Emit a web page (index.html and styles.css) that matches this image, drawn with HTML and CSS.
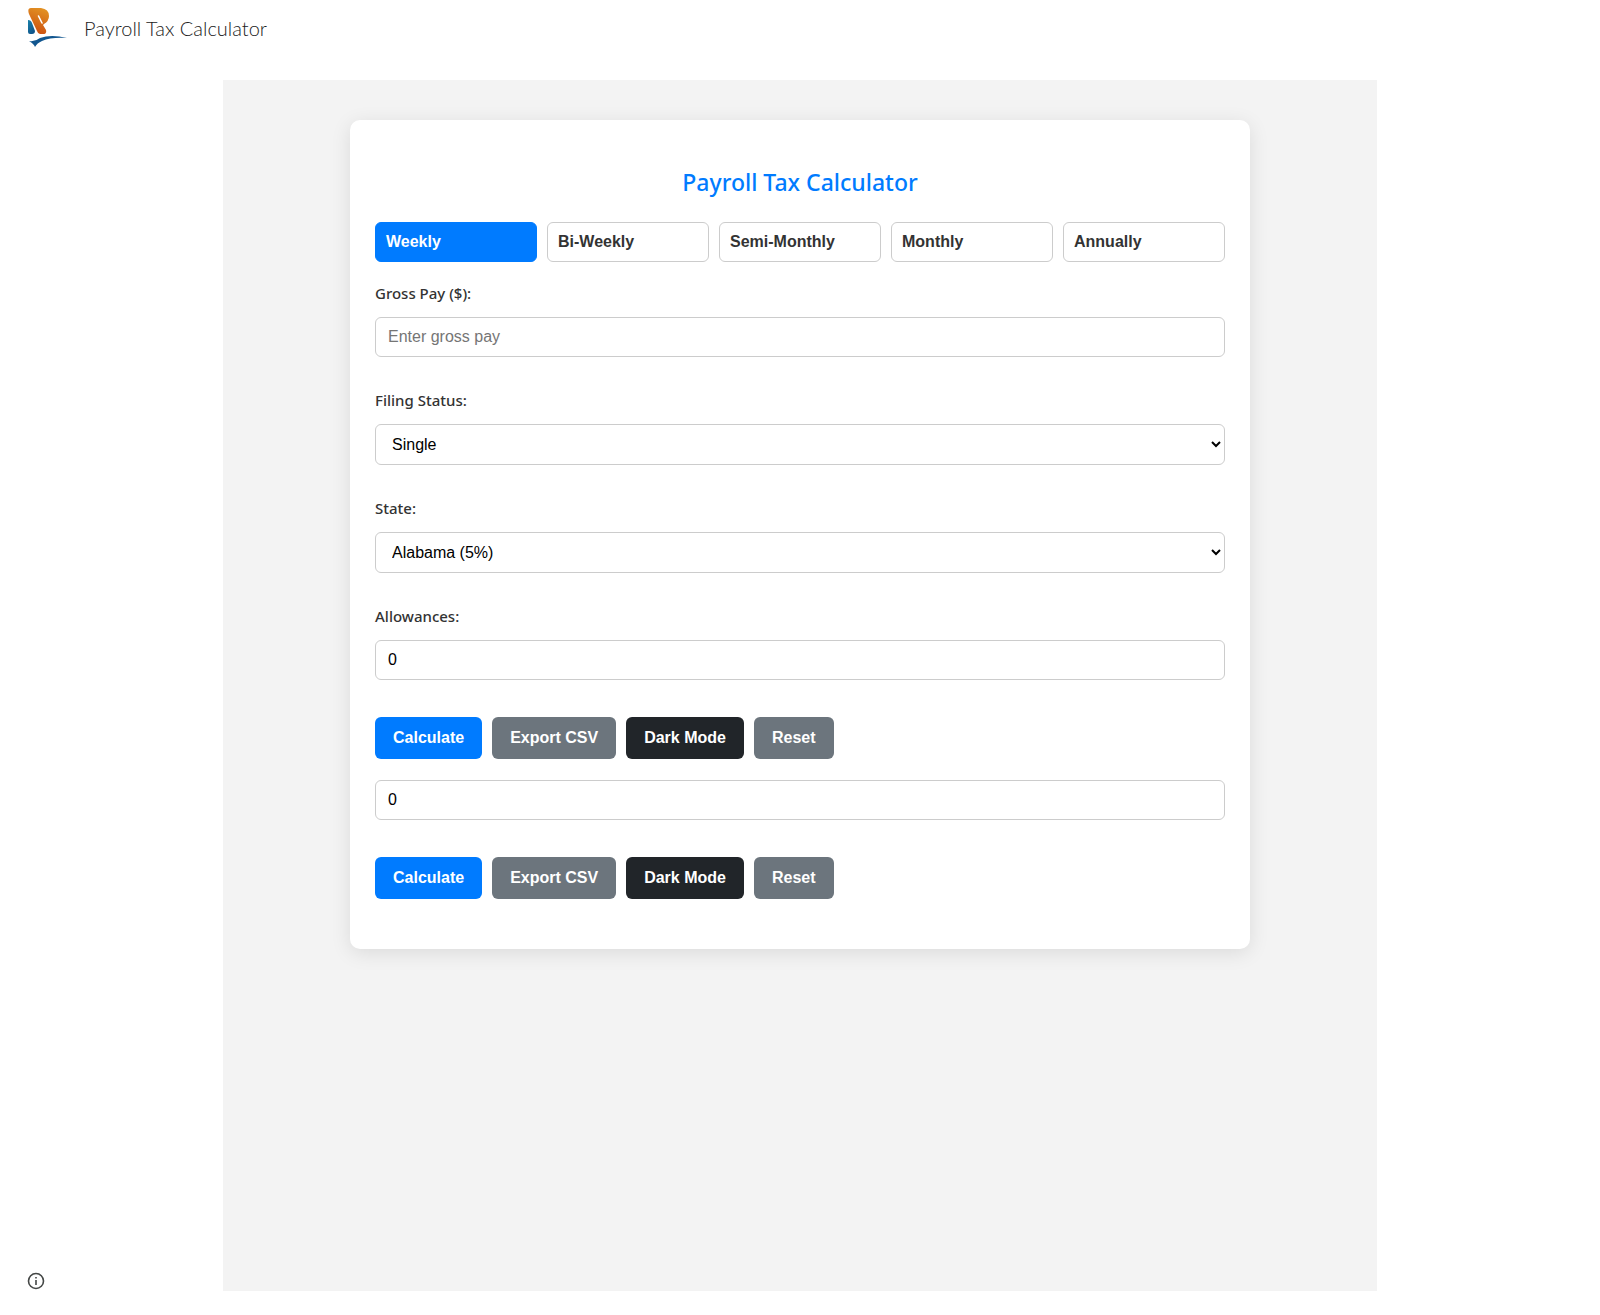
FILE: index.html
```html
<!DOCTYPE html>
<html lang="en">
<head>
<meta charset="utf-8">
<meta name="viewport" content="width=device-width, initial-scale=1">
<title>Payroll Tax Calculator</title>
<link rel="stylesheet" href="styles.css">
</head>
<body>
<header class="site-header">
  <a class="brand" href="#">
    <svg class="brand-logo" viewBox="0 0 40 40" aria-hidden="true">
      <defs>
        <linearGradient id="orange" x1="0.7" y1="0" x2="0.4" y2="1">
          <stop offset="0" stop-color="#e39324"/>
          <stop offset="1" stop-color="#cb4f10"/>
        </linearGradient>
        <linearGradient id="blue" x1="0" y1="0" x2="0.6" y2="1">
          <stop offset="0" stop-color="#1982ab"/>
          <stop offset="1" stop-color="#10548a"/>
        </linearGradient>
      </defs>
      <path fill="url(#blue)" d="M0 12 Q3 12 4 15 L7 23 Q7 26 4 26 H2 Q0 26 0 24 Z"/>
      <path fill="url(#orange)" d="M3 0 H13 Q21 1 21 8 Q21 13 16 16 L15 17 L18 22 Q19 26 15 26 H12 Q10 26 9 23 L1 6 Q-1 0 3 0 Z"/>
      <path d="M10.500 8 L14 15" stroke="#fff" stroke-width="1.600" stroke-linecap="round"/>
      <path fill="#11568f" d="M1 33 Q7 34 12 30 Q23 26 39 30 Q23 29 14 33 Q9 35 7 39 Q6 36 1 33 Z"/>
    </svg>
    <span>Payroll Tax Calculator</span>
  </a>
</header>
<main class="frame">
  <section class="card">
    <h1 class="title">Payroll Tax Calculator</h1>
    <div class="tabs">
      <button type="button" class="tab active">Weekly</button>
      <button type="button" class="tab">Bi-Weekly</button>
      <button type="button" class="tab">Semi-Monthly</button>
      <button type="button" class="tab">Monthly</button>
      <button type="button" class="tab">Annually</button>
    </div>
    <form class="form">
      <div class="field">
        <label for="gross">Gross Pay ($):</label>
        <input class="control" id="gross" type="number" placeholder="Enter gross pay">
      </div>
      <div class="field">
        <label for="status">Filing Status:</label>
        <select class="control" id="status"><option>Single</option><option>Married</option></select>
      </div>
      <div class="field">
        <label for="state">State:</label>
        <select class="control" id="state"><option>Alabama (5%)</option></select>
      </div>
      <div class="field">
        <label for="allowances">Allowances:</label>
        <input class="control" id="allowances" type="number" value="0">
      </div>
      <div class="actions">
        <button type="button" class="btn primary">Calculate</button>
        <button type="button" class="btn">Export CSV</button>
        <button type="button" class="btn dark">Dark Mode</button>
        <button type="button" class="btn">Reset</button>
      </div>
      <input class="control extra" type="number" value="0" aria-label="Allowances">
      <div class="actions">
        <button type="button" class="btn primary">Calculate</button>
        <button type="button" class="btn">Export CSV</button>
        <button type="button" class="btn dark">Dark Mode</button>
        <button type="button" class="btn">Reset</button>
      </div>
    </form>
  </section>
</main>
<button type="button" class="info" aria-label="Site information">
  <svg viewBox="0 0 20 20" aria-hidden="true">
    <circle cx="10" cy="10" r="7.500" fill="none" stroke="#444746" stroke-width="1.600"/>
    <path d="M10 9v5M10 6v1.600" stroke="#444746" stroke-width="1.600"/>
  </svg>
</button>
</body>
</html>
```
FILE: styles.css
```css
* {
  box-sizing: border-box;
}

body {
  margin: 0;
  background: #fff;
  color: #333;
  font-family: "Noto Sans", "Open Sans", sans-serif;
}

.site-header {
  height: 80px;
  padding: 8px 28px;
}

.brand {
  display: inline-flex;
  align-items: center;
  gap: 16px;
  height: 40px;
  color: #212121;
  font: 300 20px/40px Lato, sans-serif;
  text-decoration: none;
}

.brand-logo {
  width: 40px;
  height: 40px;
}

.frame {
  width: calc(100% - 446px);
  min-width: 640px;
  min-height: calc(100vh - 104px);
  margin: 0 auto 24px;
  padding: 40px 20px;
  background: #f3f3f3;
}

.card {
  max-width: 900px;
  margin: 0 auto;
  padding: 46px 25px 50px;
  border-radius: 10px;
  background: #fff;
  box-shadow: 0 4px 20px rgba(0, 0, 0, 0.1);
}

.title {
  margin: 0 0 24px;
  color: #007bff;
  font-size: 23px;
  font-weight: 500;
  line-height: 32px;
  text-align: center;
}

.tabs {
  display: grid;
  grid-template-columns: repeat(5, 1fr);
  gap: 10px;
  margin-bottom: 21px;
}

.tab,
.btn,
.control {
  border: 1px solid #ccc;
  border-radius: 6px;
  font: 16px "Liberation Sans", Arial, sans-serif;
}

.tab {
  height: 40px;
  padding: 0 10px;
  background: #fff;
  color: #333;
  font-weight: 700;
  text-align: left;
}

.tab.active {
  border-color: #007bff;
  background: #007bff;
  color: #fff;
}

.field {
  display: flex;
  flex-direction: column;
  gap: 14px;
  margin-bottom: 33px;
}

.field label {
  align-self: flex-start;
  font-size: 15px;
  font-weight: 500;
  line-height: 20px;
}

.control {
  width: 100%;
  height: 40px;
  padding: 0 12px;
  background: #fff;
  color: #000;
}

.control::placeholder {
  color: #757575;
}

select.control {
  height: 41px;
}

.field + .actions,
.extra + .actions {
  margin-top: 37px;
}

.extra {
  display: block;
  margin-top: 21px;
}

.actions {
  display: flex;
  flex-wrap: wrap;
  gap: 10px;
}

.field:has(+ .actions) {
  margin-bottom: 0;
}

.btn {
  height: 42px;
  padding: 0 18px;
  border: 0;
  background: #6c757d;
  color: #fff;
  font-weight: 700;
}

.btn.primary {
  background: #007bff;
}

.btn.dark {
  background: #212529;
}

.info {
  position: fixed;
  bottom: 24px;
  left: 26px;
  width: 20px;
  height: 20px;
  padding: 0;
  border: 0;
  background: none;
}

.info svg {
  display: block;
}
```
